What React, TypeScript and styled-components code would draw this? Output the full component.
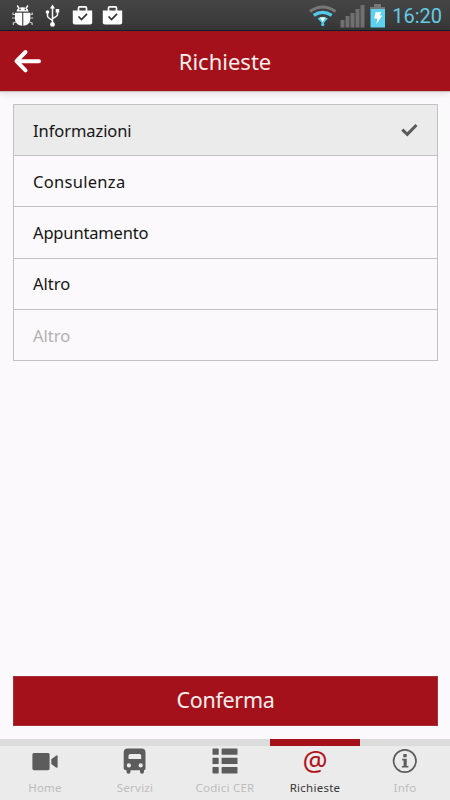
import React from 'react';
import styled, { createGlobalStyle } from 'styled-components';

const Global = createGlobalStyle`
  * { box-sizing: border-box; }
  html, body { margin: 0; padding: 0; background: #fbf9fb; }
  svg { display: block; flex: none; }
`;

const Screen = styled.div`
  width: 450px;
  height: 800px;
  display: flex;
  flex-direction: column;
  background: #fbf9fb;
  font-family: 'Noto Sans', 'Open Sans', sans-serif;
  overflow: hidden;
`;

const StatusBar = styled.div`
  height: 31px;
  flex: none;
  display: flex;
  justify-content: space-between;
  padding: 0 8px 0 10px;
  background: linear-gradient(#454545, #373737);
  border-bottom: 1px solid #092529;
`;

const StatusGroup = styled.div`
  display: flex;
  align-items: flex-start;
`;

const Clock = styled.span`
  width: 54px;
  font-family: Roboto, sans-serif;
  font-size: 20px;
  line-height: 32px;
  color: #62cbe5;
  text-align: right;
  white-space: nowrap;
`;

const Header = styled.header`
  height: 60px;
  flex: none;
  display: grid;
  grid-template-columns: 60px 1fr 60px;
  align-items: center;
  background: #a4111a;
  box-shadow: 0 1px 1px #c9c1c2, 0 2px 8px rgba(0, 0, 0, 0.13);
`;

const BackButton = styled.button`
  height: 60px;
  padding: 0 0 0 13px;
  border: 0;
  background: none;
  display: flex;
  align-items: center;
`;

const Title = styled.h1`
  margin: 0;
  font-size: 22px;
  line-height: 30px;
  font-weight: 400;
  text-align: center;
  color: #fbeeee;
  padding-bottom: 1px;
`;

const Content = styled.main`
  flex: 1;
  display: flex;
  flex-direction: column;
  justify-content: space-between;
  padding: 13px 12px 13px 13px;
`;

const List = styled.ul`
  list-style: none;
  margin: 0;
  padding: 0;
  border: 1px solid #c3c1c3;
`;

const Row = styled.li<{ $selected?: boolean; $muted?: boolean; $tracking: number }>`
  height: 51.4px;
  display: flex;
  align-items: center;
  justify-content: space-between;
  padding: 0 19px 0 19px;
  font-size: 16.5px;
  letter-spacing: ${(p) => p.$tracking}px;
  color: ${(p) => (p.$muted ? '#b2b0b2' : '#151515')};
  background: ${(p) => (p.$selected ? '#ebebeb' : 'transparent')};
  & + & { border-top: 1px solid #c3c1c3; }
  &:first-child { height: 50px; }
  &:last-child { height: 50.8px; }
`;

const Confirm = styled.button`
  height: 50px;
  margin: 0;
  padding: 0 0 2px;
  border: 1px solid #a5303a;
  background: #a4111a;
  color: #fbeeee;
  font-family: inherit;
  font-size: 21.5px;
  letter-spacing: -0.3px;
  line-height: 46px;
`;

const TabBar = styled.nav`
  height: 61px;
  flex: none;
  display: grid;
  grid-template-columns: repeat(5, 1fr);
  background: #ebebeb;
`;

const Tab = styled.div<{ $active?: boolean }>`
  display: flex;
  flex-direction: column;
  align-items: center;
  border-top: 7px solid ${(p) => (p.$active ? '#a4111a' : '#dcdcdc')};
  color: ${(p) => (p.$active ? '#b1131b' : '#5c5c5c')};
`;

const TabIcon = styled.div`
  height: 33px;
  padding-bottom: 3px;
  display: flex;
  align-items: center;
  justify-content: center;
`;

const AtSign = styled.span`
  font-size: 28px;
  font-weight: 400;
  line-height: 28px;
  padding-bottom: 2px;
`;

const TabLabel = styled.span<{ $active?: boolean }>`
  font-size: 11.5px;
  line-height: 18px;
  letter-spacing: 0.25px;
  color: ${(p) => (p.$active ? '#363636' : '#bdbdbd')};
`;

const NotificationIcons = () => (
  <svg width="116" height="30" viewBox="10 0 116 30" fill="#fff" stroke="none">
    <path d="M16.5 11.5c.3-3 2.5-4.2 6-4.2s5.7 1.2 6 4.2z" />
    <path d="M18.8 8l-1.6-2.5M26.3 8l1.6-2.5" stroke="#fff" strokeWidth="1.4" />
    <circle cx="20" cy="9.4" r=".8" fill="#404040" />
    <circle cx="25.3" cy="9.4" r=".8" fill="#404040" />
    <path d="M15 12.8h7.2v13c-4.7-.4-7.2-3-7.2-7zM23.3 12.8h7v6c0 4-2.3 6.6-7 7z" />
    <path d="M15 14.5h-2v-2M30.2 14.5h2v-2M15 18h-3M30.2 18h3M16 22l-2.7 1v2M29.4 22l2.7 1v2" fill="none" stroke="#ccc" strokeWidth="1.2" />
    <path d="M52.5 7v17M47.5 12v4q0 1.5 5 4.5M57.5 11v3.5q0 1.8-5 4" fill="none" stroke="#f5f5f5" strokeWidth="1.5" />
    <path d="M52.5 4.5l2.5 4h-5zM55.7 9h3.5v3.5h-3.5z" />
    <circle cx="47.5" cy="12" r="1.8" />
    <circle cx="52.5" cy="24.4" r="2.4" />
    {[82.5, 112.5].map((x) => (
      <g key={x} transform={`translate(${x} 0)`}>
        <path d="M-4 11V8q0-1.2 1.2-1.2h5.6Q4 6.8 4 8v3" fill="none" stroke="#fff" strokeWidth="1.7" />
        <path d="M-9.7 10.5H9.7v12q0 2-2 2H-7.7q-2 0-2-2z" />
        <path d="M-4 16.5l3 3 5.5-5.7" fill="none" stroke="#333" strokeWidth="1.7" />
      </g>
    ))}
  </svg>
);

const SystemIcons = () => (
  <svg width="80" height="30" viewBox="308 0 80 30">
    <path d="M310 11.5Q322.5 2.5 335.5 11.5" fill="none" stroke="#777" strokeWidth="3" />
    <path d="M313.7 15.4Q322.5 9.2 331.7 15.4" fill="none" stroke="#52cbea" strokeWidth="3.2" />
    <path d="M317.5 18.5Q322.6 15.2 328 18.5L322.8 24z" fill="#52cbea" />
    <path d="M319.8 17.5h5.8l-3 4.3z" fill="#fff" />
    <circle cx="322.7" cy="24.4" r="1.7" fill="#52cbea" />
    {[20, 16, 13, 9, 5].map((y, i) => (
      <rect key={y} x={340.5 + i * 5} y={y} width="4" height={27.5 - y} fill="#707070" />
    ))}
    <path d="M374 4h7v3h4v2.5h-15V7h4z" fill="#777" />
    <rect x="370.5" y="9" width="14.5" height="18.5" fill="#5dd1ed" />
    <path d="M375.5 12.3l6-.3-2 3.5h2.7l-5.8 8.5.9-5.5h-3.1z" fill="#fff" />
  </svg>
);

const BackArrow = () => (
  <svg width="29" height="26" viewBox="0 0 29 26" fill="none" stroke="#fff" strokeWidth="4" strokeLinecap="round" strokeLinejoin="round">
    <path d="M12.5 4L3.5 13.2l9 9.2M3.8 13.2H26" />
  </svg>
);

const CheckIcon = () => (
  <svg width="17" height="14" viewBox="0 0 17 14" fill="none" stroke="#5a5a5a" strokeWidth="3">
    <path d="M1.3 6.7l5 4.7L15.5 2" />
  </svg>
);

const VideoIcon = () => (
  <svg width="26" height="26" viewBox="0 0 26 26" fill="currentColor">
    <path d="M2 5h14q1.6 0 1.6 1.6v14q0 1.6-1.6 1.6H2q-1.6 0-1.6-1.6v-14Q.4 5 2 5z" />
    <path d="M19.3 11.2L24 7.7q1.6-1 1.6.5v10.6q0 1.6-1.6.6l-4.7-3.5z" />
  </svg>
);

const BusIcon = () => (
  <svg width="24" height="26" viewBox="0 0 24 26" fill="currentColor" fillRule="evenodd">
    <path d="M4.5.5h14.2q3.8 0 3.8 4v16q0 1.7-1.5 1.7v1.6q0 1.9-2 1.9t-2-1.9v-1.6H7.5v1.6q0 1.9-2 1.9t-2-1.9v-1.6Q.7 22.2.7 20.5v-16q0-4 3.8-4zM7.3 6q-1.8 0-1.8 1.8v3.1h12.7V7.8q0-1.8-1.8-1.8zM5.9 15.3a2 2 0 100 4.2 2 2 0 000-4.2zm11.8 0a2 2 0 100 4.2 2 2 0 000-4.2z" />
  </svg>
);

const ListIcon = () => (
  <svg width="26" height="26" viewBox="0 0 26 26" fill="currentColor">
    {[0.5, 9.8, 19.1].map((y) => (
      <React.Fragment key={y}>
        <rect x=".5" y={y} width="6.2" height="6.3" rx=".6" />
        <rect x="9.6" y={y} width="15.9" height="6.3" rx=".6" />
      </React.Fragment>
    ))}
  </svg>
);

const InfoIcon = () => (
  <svg width="26" height="26" viewBox="0 0 26 26">
    <circle cx="12.8" cy="13" r="11.2" fill="none" stroke="currentColor" strokeWidth="1.7" />
    <path d="M11.3 6.1h3.4v3.2h-3.4zM10.2 10.8h4.5v7.1h1.7v1.6h-6.5v-1.6h1.7v-5.5h-1.4z" fill="currentColor" />
  </svg>
);

const requests = [
  { label: 'Informazioni', tracking: -0.07, selected: true },
  { label: 'Consulenza', tracking: 0.3 },
  { label: 'Appuntamento', tracking: -0.16 },
  { label: 'Altro', tracking: 0 },
  { label: 'Altro', tracking: 0, muted: true },
];

const tabs = [
  { label: 'Home', icon: <VideoIcon /> },
  { label: 'Servizi', icon: <BusIcon /> },
  { label: 'Codici CER', icon: <ListIcon /> },
  { label: 'Richieste', icon: <AtSign>@</AtSign>, active: true },
  { label: 'Info', icon: <InfoIcon /> },
];

export default function App() {
  return (
    <Screen>
      <Global />
      <StatusBar>
        <StatusGroup><NotificationIcons /></StatusGroup>
        <StatusGroup><SystemIcons /><Clock>16:20</Clock></StatusGroup>
      </StatusBar>
      <Header>
        <BackButton aria-label="Indietro"><BackArrow /></BackButton>
        <Title>Richieste</Title>
      </Header>
      <Content>
        <List>
          {requests.map((r, i) => (
            <Row key={i} $selected={r.selected} $muted={r.muted} $tracking={r.tracking}>
              {r.label}
              {r.selected && <CheckIcon />}
            </Row>
          ))}
        </List>
        <Confirm>Conferma</Confirm>
      </Content>
      <TabBar>
        {tabs.map((t) => (
          <Tab key={t.label} $active={t.active}>
            <TabIcon>{t.icon}</TabIcon>
            <TabLabel $active={t.active}>{t.label}</TabLabel>
          </Tab>
        ))}
      </TabBar>
    </Screen>
  );
}
